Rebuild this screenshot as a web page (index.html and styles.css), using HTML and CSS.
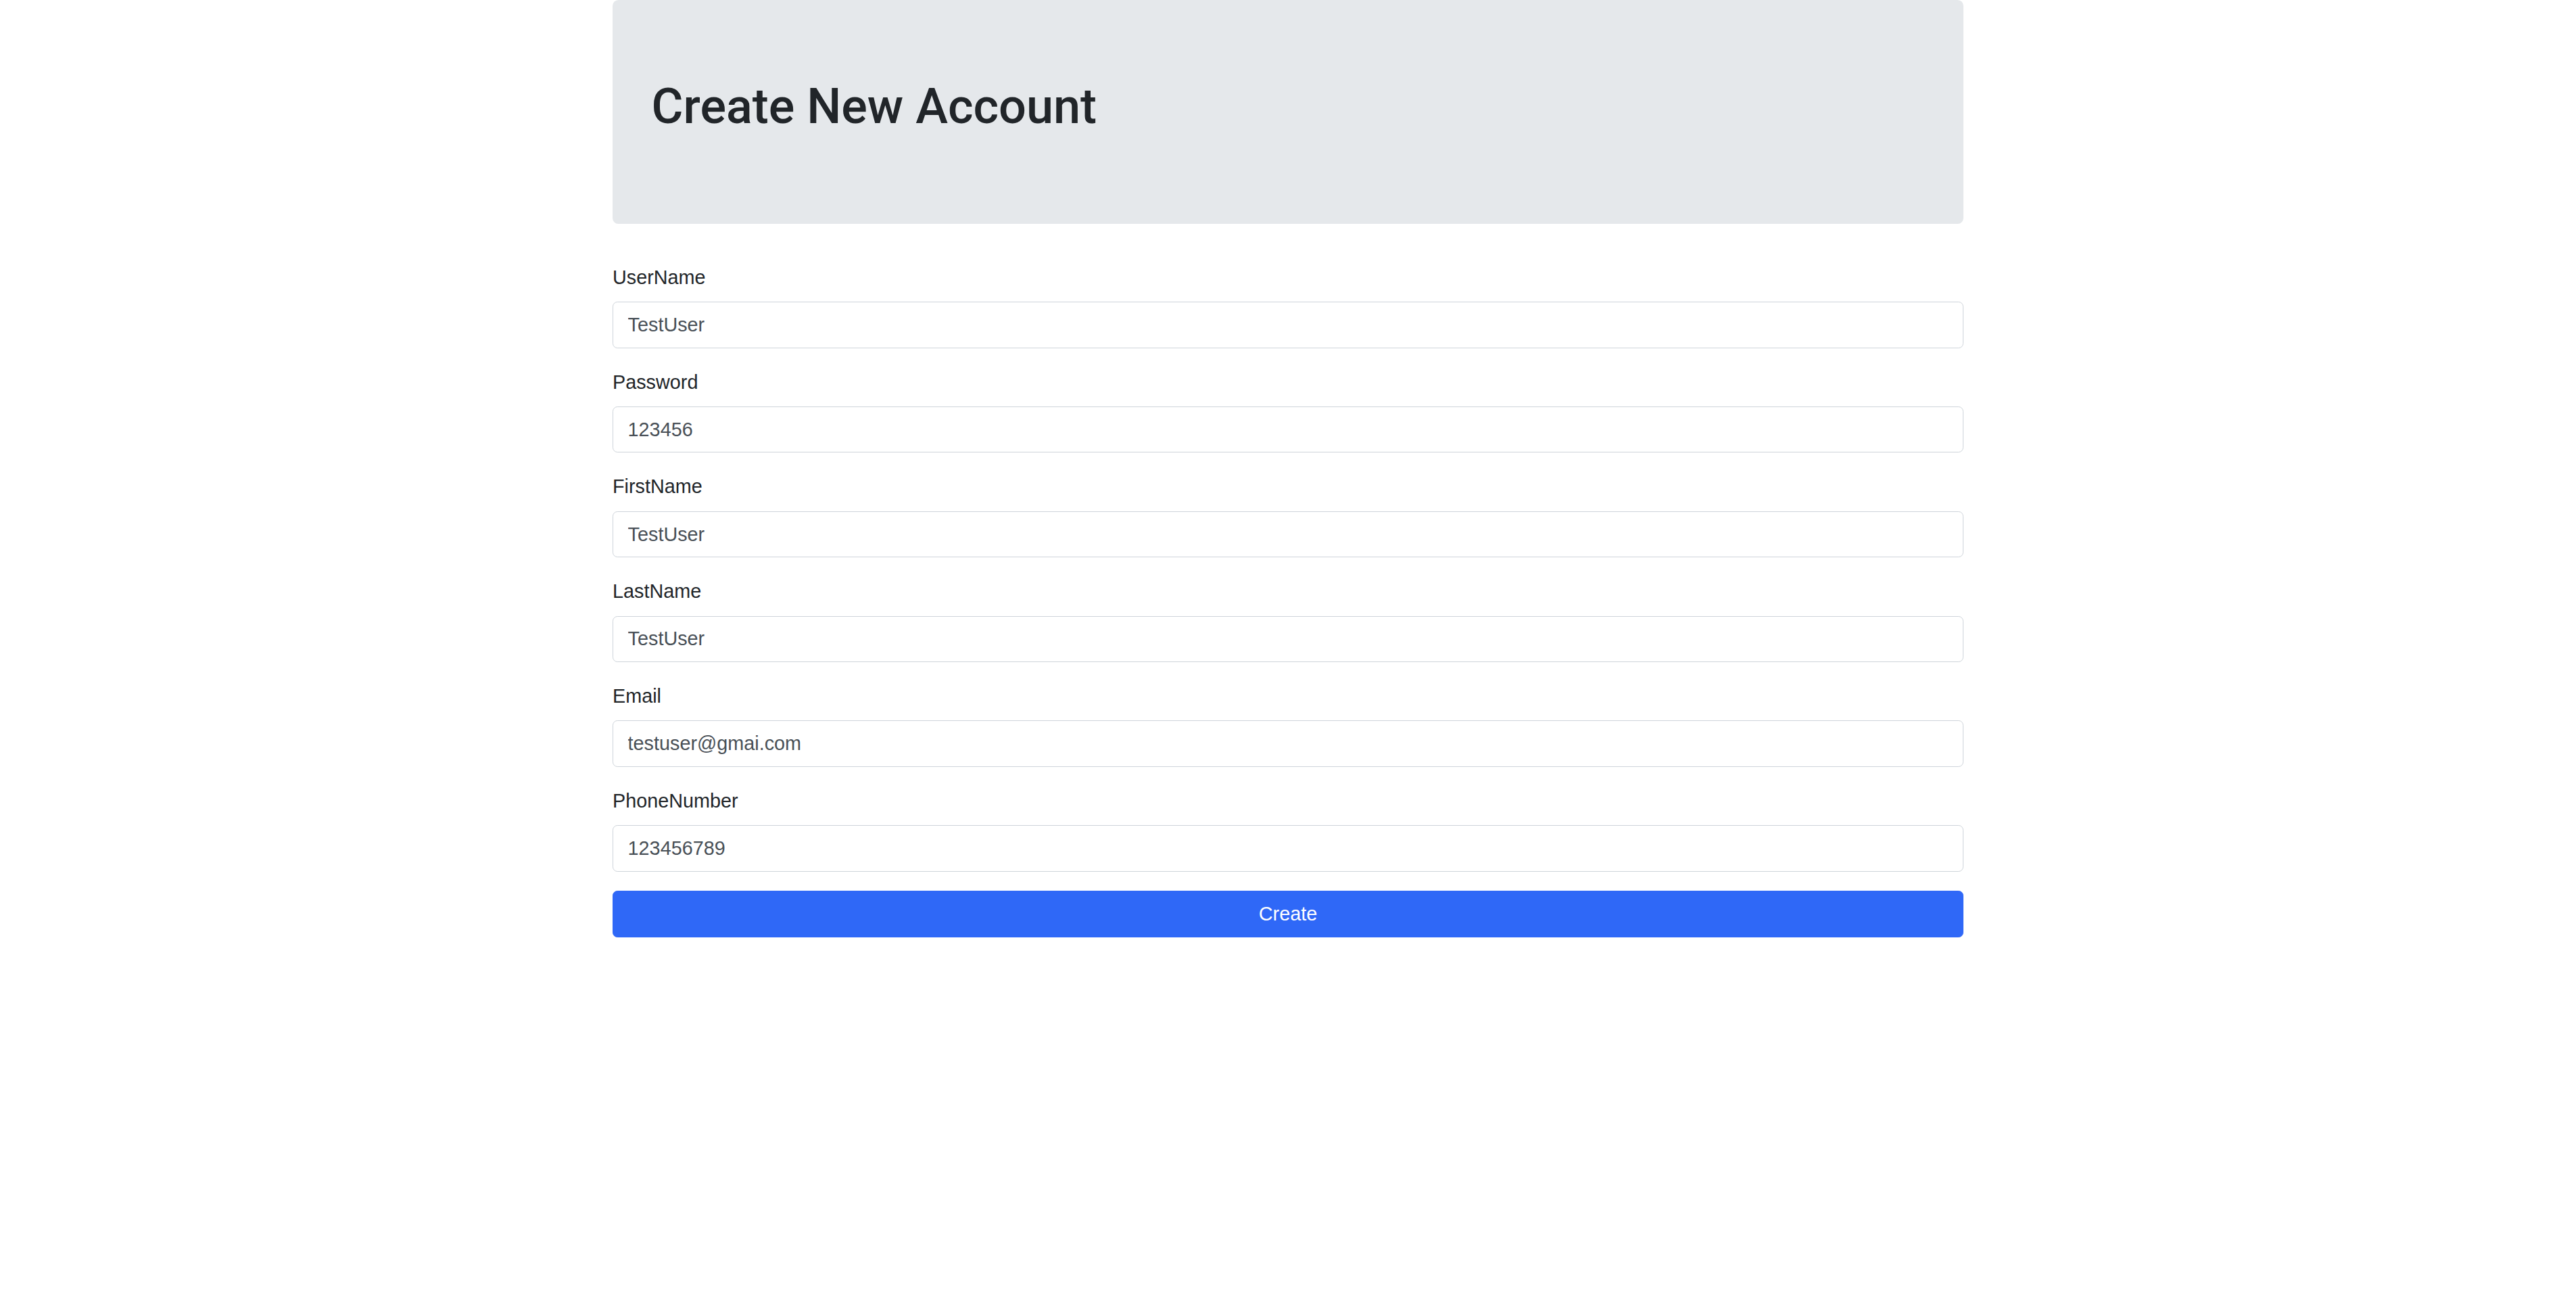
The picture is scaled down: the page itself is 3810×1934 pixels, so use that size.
FILE: index.html
```html
<!DOCTYPE html>
<html lang="en">
<head>
<meta charset="utf-8">
<title>Create New Account</title>
<link rel="stylesheet" href="styles.css">
</head>
<body>
<div class="container">
  <div class="jumbotron">
    <h1 class="title">Create New Account</h1>
  </div>
  <form class="form">
    <div class="form-group">
      <label class="label" for="username">UserName</label>
      <input class="input" id="username" type="text" value="TestUser">
    </div>
    <div class="form-group">
      <label class="label" for="password">Password</label>
      <input class="input" id="password" type="text" value="123456">
    </div>
    <div class="form-group">
      <label class="label" for="firstname">FirstName</label>
      <input class="input" id="firstname" type="text" value="TestUser">
    </div>
    <div class="form-group">
      <label class="label" for="lastname">LastName</label>
      <input class="input" id="lastname" type="text" value="TestUser">
    </div>
    <div class="form-group">
      <label class="label" for="email">Email</label>
      <input class="input" id="email" type="text" value="testuser@gmai.com">
    </div>
    <div class="form-group">
      <label class="label" for="phone">PhoneNumber</label>
      <input class="input" id="phone" type="text" value="123456789">
    </div>
    <button class="btn" type="button">Create</button>
  </form>
</div>
</body>
</html>
```
FILE: styles.css
```css
html, body {
  margin: 0;
  padding: 0;
  background: #ffffff;
}
body {
  font-family: "Liberation Sans", Arial, Helvetica, sans-serif;
  font-size: 28.8px;
  line-height: 1.5;
  color: #212529;
}
.container {
  width: 1998px;
  margin: 0 auto;
}
.jumbotron {
  background: #e5e8eb;
  border-radius: 8.64px;
  padding: 115.2px 57.6px;
  margin-bottom: 57.6px;
}
.title {
  margin: 0 0 14.4px 0;
  font-family: Roboto, "Liberation Sans", Arial, sans-serif;
  font-size: 72px;
  line-height: 1.2;
  font-weight: 500;
  color: #212529;
}
.form {
  margin: 0;
}
.form-group {
  margin-bottom: 28.8px;
}
.label {
  display: inline-block;
  margin-bottom: 14.4px;
  color: #212529;
}
.input {
  display: block;
  box-sizing: border-box;
  width: 100%;
  height: 68.4px;
  margin: 0;
  padding: 10.8px 21.6px;
  font-family: inherit;
  font-size: 28.8px;
  line-height: 1.5;
  color: #495057;
  background: #ffffff;
  border: 1.8px solid #ced4da;
  border-radius: 7.2px;
  outline: none;
}
.btn {
  display: block;
  box-sizing: border-box;
  width: 100%;
  height: 68.4px;
  margin: 0;
  padding: 10.8px 21.6px;
  font-family: inherit;
  font-size: 28.8px;
  line-height: 1.5;
  color: #ffffff;
  background: #2f68f7;
  border: 1.8px solid #2f68f7;
  border-radius: 7.2px;
  cursor: pointer;
}
```
